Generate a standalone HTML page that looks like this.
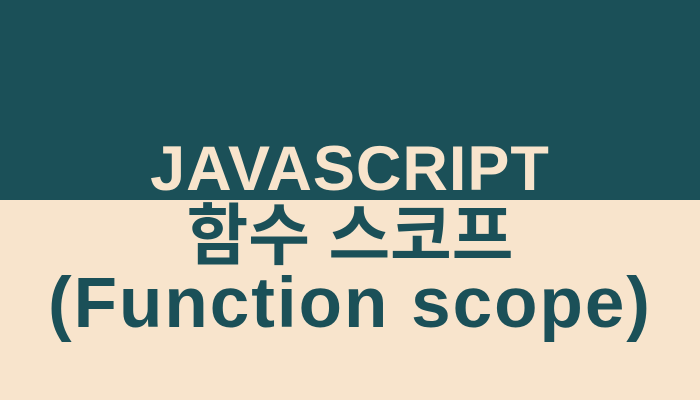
<!DOCTYPE html>
<html><head><meta charset="utf-8"><style>
html,body{margin:0;padding:0}
body{width:700px;height:400px;position:relative;overflow:hidden;background:#f8e4cc}
.top{position:absolute;left:0;top:0;width:700px;height:200px;background:#1b5058}
.t{position:absolute;left:0;width:700px;text-align:center;white-space:nowrap;font-weight:bold}
.a{top:138px;font:bold 63px/63px "Liberation Sans",sans-serif;color:#f8e4cc;letter-spacing:1px}
.b{top:203px;font:bold 67px/67px "Liberation Sans","Noto Sans CJK KR",sans-serif;color:#1b5058}
.c{top:268px;font:bold 71px/71px "Liberation Sans",sans-serif;color:#1b5058;letter-spacing:2px}
</style></head><body>
<div class="top"></div>
<div class="t a">JAVASCRIPT</div>
<div class="t b">함수 스코프</div>
<div class="t c">(Function scope)</div>
</body></html>
